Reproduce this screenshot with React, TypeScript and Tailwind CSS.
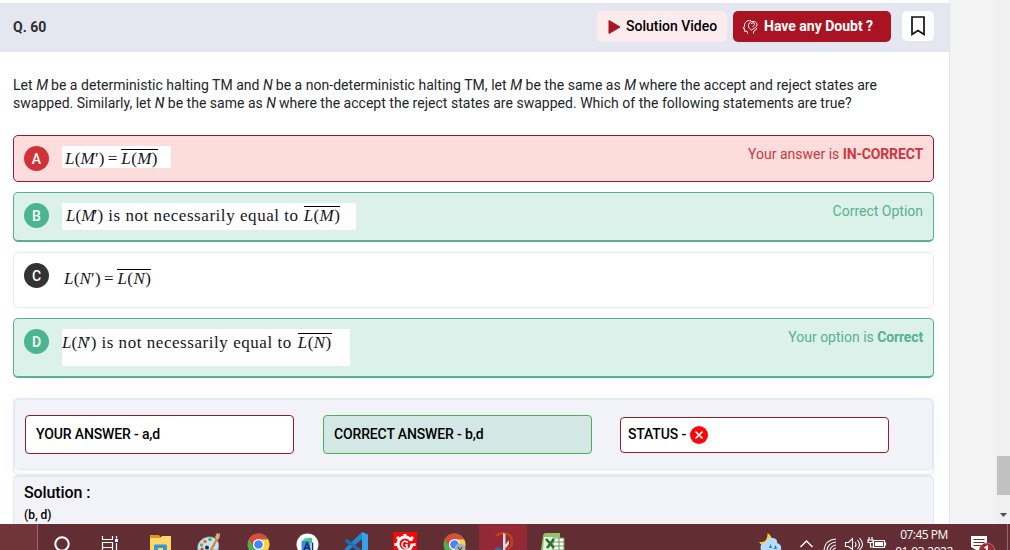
import type { ReactNode } from "react";

const Over = ({ children }: { children: ReactNode }) => (
  <span className="inline-block border-t border-black leading-[17px] tracking-[0.4px]">{children}</span>
);

const It = ({ children }: { children: ReactNode }) => <i className="tracking-[-0.5px]">{children}</i>;

function Formula({ v, gap, prime }: { v: string; gap: string; prime: string }) {
  return (
    <span className={gap}>
      <i>L</i>(<i>{v}</i>
      <span className={prime}>′</span>)
    </span>
  );
}

function Barred({ v }: { v: string }) {
  return (
    <Over>
      <i>L</i>(<i>{v}</i>)
    </Over>
  );
}

function Option({
  letter,
  card,
  dot,
  children,
  note,
}: {
  letter: string;
  card: string;
  dot: string;
  children: ReactNode;
  note?: ReactNode;
}) {
  return (
    <div className={`flex w-[921px] items-start rounded-[5px] border pl-[10px] pr-[10px] pt-[10px] ${card}`}>
      <div
        className={`flex size-[25px] shrink-0 items-center justify-center rounded-full text-[14px] font-medium leading-none text-white ${dot}`}
      >
        {letter}
      </div>
      {children}
      <div className="ml-auto text-[14px] leading-[16px]">{note}</div>
    </div>
  );
}

const mathBox =
  "ml-[13px] shrink-0 whitespace-nowrap font-['Liberation_Serif',serif] text-[17px] leading-[18px] text-[#16161c]";

function Chrome({ extra }: { extra?: ReactNode }) {
  return (
    <svg width="49" height="26" viewBox="0 0 49 26">
      <circle cx="24.5" cy="20.5" r="11" fill="#4caf50" />
      <path d="M15 15A11 11 0 0 1 34 15L24.5 15.5 19 23Z" fill="#e04a3c" />
      <path d="M24.5 15.5H34.2A11 11 0 0 1 30 30L24.5 31 30 21Z" fill="#fdd041" />
      <circle cx="24.5" cy="20.5" r="5.6" fill="#fff" />
      <circle cx="24.5" cy="20.5" r="4.3" fill="#4386f5" />
      {extra}
    </svg>
  );
}

function Taskbar() {
  return (
    <div className="flex h-[26px] w-full shrink-0 overflow-hidden bg-[#622e34]">
      <div className="h-full w-[38px] shrink-0 border-r border-[#926a6e] bg-[#713439]" />
      <svg width="49" height="26" viewBox="0 0 49 26" fill="none" stroke="#fff" strokeWidth="2">
        <circle cx="24" cy="20" r="6.7" />
      </svg>
      <svg width="49" height="26" viewBox="0 0 49 26" fill="none" stroke="#fff" strokeWidth="1.2">
        <path d="M15.500 12v3.500h10V12M15.500 26v-7.500h10V26M15.500 23.500h10M29.500 12v2.500M29.500 19v7" />
        <rect x="28" y="15" width="3" height="3" fill="#fff" stroke="none" />
      </svg>
      <svg width="49" height="26" viewBox="0 0 49 26">
        <path d="M14 11h9l2 3v3H14z" fill="#dc9b20" />
        <path d="M14 14h10l2-2h9v14H14z" fill="#fbd768" />
        <path d="M18 26v-4q0-1.500 1.500-1.500h10q1.500 0 1.500 1.500v4h-4v-2h-5v2z" fill="#3498d3" />
      </svg>
      <svg width="49" height="26" viewBox="0 0 49 26">
        <path d="M13 26C11 18 19 12 26 13c6 1 9 5 7 13z" fill="#c9e2ee" stroke="#7faec6" strokeWidth=".7" />
        <circle cx="20" cy="17.500" r="1.800" fill="#ef6b2a" />
        <circle cx="25" cy="15.500" r="1.800" fill="#4cb04e" />
        <circle cx="16.500" cy="21" r="1.700" fill="#67b345" />
        <circle cx="22" cy="23.500" r="2" fill="#1f2f45" />
        <circle cx="17" cy="25" r="1.500" fill="#d8343a" />
        <path d="M33 13l-7 13" stroke="#d18a43" strokeWidth="2.400" />
        <path d="M30 13l2-4 1.500 1 1.500-1-.5 5-2 2z" fill="#dfae75" />
      </svg>
      <Chrome />
      <svg width="49" height="26" viewBox="0 0 49 26">
        <circle cx="24.500" cy="20.500" r="11" fill="#fff" />
        <path d="M19 17q5-6 9-1v3h-9z" fill="#3ddc84" />
        <path d="M18.500 17h9v9h-9z" fill="#4285e8" />
        <path d="M26 14h3v5h-3z" fill="#3bc98a" />
        <path d="M21 26l3-7 3 7M29.500 18.500V26M22 24h4" stroke="#10305d" strokeWidth="1.500" fill="none" />
      </svg>
      <svg width="49" height="26" viewBox="0 0 49 26">
        <path d="M30 8l6 2.500V26h-6z" fill="#2fa4ec" />
        <path d="M30 8v7L17 26h-4l-.5-1z" fill="#1b8ad3" />
        <path d="M12.500 17l2.200-2L30 26v1h-4z" fill="#0f74bd" />
      </svg>
      <svg width="49" height="26" viewBox="0 0 49 26">
        <path fill="#fa0508" d="M12 8h24v18H12z" />
        <g fill="none" stroke="#fff">
          <circle cx="24" cy="20" r="7" strokeWidth="3" />
          <path d="M24 10v4M16 13l2.500 2.500M32 13l-2.500 2.500M13.500 20.500H18M30 20.500h4.500" strokeWidth="3" />
          <path d="M27 18.500q-5-3-6 1.500 0 5 5 4v-3h-2" strokeWidth="1.500" />
        </g>
        <path d="M29 17h4v2.500h-4z" fill="#fa0508" />
      </svg>
      <Chrome
        extra={
          <g>
            <circle cx="30" cy="25" r="5.500" fill="#a9b2ba" />
            <path d="M28 23l2 3 2-3" stroke="#4a5054" strokeWidth="1.200" fill="none" />
          </g>
        }
      />
      <svg width="49" height="26" viewBox="0 0 49 26">
        <path d="M0 0h48v26H0z" fill="#942936" />
        <path d="M17 12q3-3 8-3 8 1 8 9 0 5-5 7" fill="none" stroke="#c63c1a" strokeWidth="2.600" />
        <path d="M24 9l2.500 1v16H24zM26 21l4-5v4l-3 4z" fill="#d8d9df" />
        <path d="M15 26q3-5 8-1v1z" fill="#286ca8" />
      </svg>
      <svg width="49" height="26" viewBox="0 0 49 26">
        <path d="M13 26l2-14q.3-3 3-3h14v17z" fill="#8dc26f" />
        <path d="M15 26l1-13h15v13z" fill="#e2f0d7" />
        <path d="M25 14h11v12H25z" fill="#fff" stroke="#5f9c50" strokeWidth="1" />
        <path d="M25 18h11M25 22h11M31 14v12" stroke="#5f9c50" strokeWidth="1" />
        <path d="M18 15l8 9M26 15l-7 9" stroke="#237329" strokeWidth="2.600" />
      </svg>
      <div className="flex-1" />
      <svg className="shrink-0" width="40" height="26" viewBox="0 0 40 26">
        <path d="M15.500 9q5 3 4 8l-5 6q-5-1-7.500-5 9 1 8.500-9z" fill="#f7cb31" />
        <path d="M9 26q-2-6 4-7 2-6 8-5 5 1 4 5 5 1 4 7z" fill="#b7dcf6" />
        <path d="M17 24l1.500-4 1.500 4zM22 25l1.500-4 1.500 4z" fill="#1881d0" />
      </svg>
      <svg className="shrink-0" width="28" height="26" viewBox="0 0 28 26" fill="none" stroke="#fff" strokeWidth="1.400">
        <path d="M8.500 23l6-6 6 6" />
      </svg>
      <svg className="shrink-0" width="22" height="26" viewBox="0 0 22 26" fill="none" stroke="#fff" strokeWidth="1.100">
        <path d="M4 26Q5 16 16 15M7 26q1-7 9-8M10 26q1-4 6-5M13 26q1-2 3-2" />
      </svg>
      <svg className="shrink-0" width="24" height="26" viewBox="0 0 24 26" fill="none" stroke="#fff" strokeWidth="1.100">
        <path d="M3.500 18.500h3l4-4v11l-4-3h-3zM13 18q2 2.500 0 5M15.500 16q4 4.500 0 9M17.500 14q6 6.500 0 12" />
      </svg>
      <svg className="shrink-0" width="26" height="26" viewBox="0 0 26 26" fill="none" stroke="#fff" strokeWidth="1.200">
        <path d="M7.500 16.500h11v7h-11zM19.500 18.500v3M3 13v3M6 13v3M2 16h5v2.500H2zM4.500 18v5H7" />
        <path d="M9 18h8v4H9z" fill="#fff" stroke="none" />
      </svg>
      <div className="flex w-[64px] shrink-0 flex-col items-center whitespace-nowrap font-['Open_Sans',sans-serif] text-[12px] leading-[17px] tracking-[-0.5px] text-white">
        <span className="pt-[2px]">07:45 PM</span>
        <span>01-03-2022</span>
      </div>
      <svg className="ml-[13px] shrink-0" width="41" height="26" viewBox="0 0 41 26">
        <path d="M2 12h16v14H7l-5-3z" fill="#fff" />
        <path d="M4.500 15.500h11M4.500 18.500h11M4.500 21.500h8" stroke="#622e34" />
        <circle cx="18" cy="27" r="8" fill="#982b36" stroke="#c07379" strokeWidth=".8" />
        <path d="M15.500 24l2.500-1.500v4" stroke="#fff" strokeWidth="1.800" fill="none" />
        <path d="M38.500 0v26" stroke="#926a6e" />
      </svg>
    </div>
  );
}

export default function App() {
  return (
    <div className="flex h-[550px] w-[1010px] flex-col overflow-hidden bg-white font-['Roboto',sans-serif]">
      <div className="flex h-[524px] shrink-0 overflow-hidden">
        <main className="w-[950px] shrink-0 border-r border-[#e6e6e9] pt-[3px]">
          <header className="flex h-[49px] items-start bg-[#e5e7f0] pl-[13px] pt-[8px]">
            <h1 className="pt-[8px] text-[14px] font-bold leading-[17px] text-[#2d2d2f]">Q. 60</h1>
            <div className="ml-auto flex h-[31px] w-[130px] items-center rounded-[5px] bg-[#fcebec] pl-[11px] text-[14px] font-medium text-black">
              <svg width="13" height="16" viewBox="0 0 13 16" className="mr-[5px] shrink-0">
                <path d="M1 1.500L12 8 1 14.500z" fill="#aa1422" stroke="#aa1422" strokeLinejoin="round" />
              </svg>
              <span className="whitespace-nowrap">Solution Video</span>
            </div>
            <div className="ml-[6px] flex h-[31px] w-[158px] items-center rounded-[5px] bg-[#aa1422] pl-[9px] text-[14px] font-bold text-white">
              <svg width="16" height="16" viewBox="0 0 16 16" className="mr-[6px] shrink-0" fill="none" stroke="#fff" strokeWidth="1">
                <path d="M9 1.700C5 .8 2.300 3.500 2.500 7L1.200 9.500h1.300v2.700H5l.8 2.300M11.500 14.500v-2q2.500-1 3.300-3.500" />
                <path d="M9.500 11C6.500 9.500 6 7 6.800 5 8.300 1.300 14.500 1.600 15 5.500 15 8.500 12.500 8.800 9.500 11z" />
                <path d="M9.200 5c.3-1.800 3.400-1.600 3.400.2 0 1.300-1.600 1.100-1.800 2.600" />
              </svg>
              <span className="whitespace-nowrap">Have any Doubt ?</span>
            </div>
            <div className="ml-[11px] mr-[15px] flex h-[30px] w-[32px] items-center justify-center rounded-[5px] bg-white">
              <svg width="16" height="22" viewBox="0 0 16 22" fill="none" stroke="#111" strokeWidth="1.700">
                <path d="M2 2h12v17.500l-6-4-6 4z" />
              </svg>
            </div>
          </header>

          <div className="h-[83px] whitespace-nowrap pl-[13px] pt-[24px] text-[14px] leading-[18px] tracking-[0.02px] text-[#212529]">
            <p className="tracking-[0.03px]">
              Let <It>M</It> be a deterministic halting TM and <It>N</It> be a non-deterministic halting TM, let{" "}
              <It>M</It>
              <span className="-ml-[2px]">′</span> be the same as <It>M</It> where the accept and reject states are
            </p>
            <p>
              swapped. Similarly, let <It>N</It>
              <span className="-ml-[2px]">′</span> be the same as <It>N</It> where the accept the reject states are
              swapped. Which of the following statements are true?
            </p>
          </div>

          <section className="flex flex-col gap-[10px] pl-[13px]">
            <Option
              letter="A"
              card="h-[47px] border-[#8f1c31] bg-[#fddcdc]"
              dot="bg-[#d03238]"
              note={
                <span className="text-[#c9383d]">
                  Your answer is <b className="tracking-[-0.15px]">IN-CORRECT</b>
                </span>
              }
            >
              <div className={`${mathBox} h-[22px] w-[109px] bg-white pl-[3px] pt-[3px]`}>
                <Formula v="M" gap="tracking-[0.2px]" prime="" />
                <span className="ml-[3px] mr-[4px]">=</span>
                <Barred v="M" />
              </div>
            </Option>
            <Option
              letter="B"
              card="h-[50px] border-b-2 border-[#56b28e] bg-[#dcf1e9]"
              dot="bg-[#4ab590]"
              note={<span className="text-[#56b28e]">Correct Option</span>}
            >
              <div className={`${mathBox} h-[27px] w-[294px] bg-white pl-[4px] pt-[3px]`}>
                <Formula v="M" gap="mr-[5px]" prime="-ml-[1.500px]" />
                <span className="mr-[5px] tracking-[0.55px]">is not necessarily equal to</span>
                <Barred v="M" />
              </div>
            </Option>
            <Option letter="C" card="h-[56px] border-[#e7e8e9] bg-white" dot="bg-[#333333]">
              <div className={`${mathBox} pl-[2px] pt-[6px]`}>
                <Formula v="N" gap="tracking-[0.2px]" prime="" />
                <span className="ml-[3px] mr-[4px]">=</span>
                <Barred v="N" />
              </div>
            </Option>
            <Option
              letter="D"
              card="h-[60px] border-b-2 border-[#56b28e] bg-[#dcf1e9]"
              dot="bg-[#4ab590]"
              note={
                <span className="text-[#56b28e]">
                  Your option is <b className="tracking-[-0.15px]">Correct</b>
                </span>
              }
            >
              <div className={`${mathBox} h-[37px] w-[288px] bg-white pt-[4px]`}>
                <Formula v="N" gap="mr-[5px]" prime="-ml-[1.500px]" />
                <span className="mr-[6px] tracking-[0.55px]">is not necessarily equal to</span>
                <Barred v="N" />
              </div>
            </Option>
          </section>

          <section className="ml-[13px] mt-[20px] w-[921px] rounded-[5px] border border-t-0 border-[#e7e9f0] bg-[#fafafc] pb-[4px] shadow-[0_0_14px_rgba(90,90,140,0.05)]">
            <div className="flex h-[72px] items-start rounded-[5px] border border-t-2 border-[#e6e8ef] bg-[#f2f3f9] pl-[10px] pt-[15px] text-[14px] font-medium tracking-[-0.14px] text-black">
              <div className="flex h-[39px] w-[269px] items-center rounded-[4px] border border-[#8f1c31] bg-white pl-[10px]">
                YOUR ANSWER - a,d
              </div>
              <div className="ml-[29px] flex h-[39px] w-[269px] items-center rounded-[4px] border border-[#4bb052] bg-[#d3e8e4] pl-[10px]">
                CORRECT ANSWER - b,d
              </div>
              <div className="ml-[28px] mt-[2px] flex h-[36px] w-[269px] items-center rounded-[4px] border border-[#9b1c28] bg-white pl-[7px]">
                <span className="-mt-[2px]">STATUS -</span>
                <svg width="18" height="18" viewBox="0 0 18 18" className="ml-[4px]">
                  <circle cx="9" cy="9" r="9" fill="#f80808" />
                  <path d="M5.500 5.500l7 7M12.500 5.500l-7 7" stroke="#fff" strokeWidth="1.700" />
                </svg>
              </div>
            </div>
          </section>
          <section className="ml-[13px] h-[60px] w-[921px] rounded-t-[5px] border border-t-2 border-[#e6e8ef] bg-[#f2f3f9] pl-[10px] pt-[6px] text-black">
            <h2 className="text-[16px] font-medium leading-[19px] tracking-[-0.1px]">Solution :</h2>
            <p className="mt-[6px] text-[12px] font-medium leading-[15px]">(b, d)</p>
          </section>
        </main>
        <div className="flex-1 bg-[#f3f3f3]" />
        <div className="flex w-[15px] flex-col items-end bg-[#f0f0f0] pt-[456px]">
          <div className="h-[39px] w-[13px] bg-[#c1c1c1]" />
          <svg width="13" height="8" viewBox="0 0 13 8" className="mt-[16px]">
            <path d="M3 2h7L6.500 6z" fill="#505050" />
          </svg>
        </div>
      </div>
      <Taskbar />
    </div>
  );
}
